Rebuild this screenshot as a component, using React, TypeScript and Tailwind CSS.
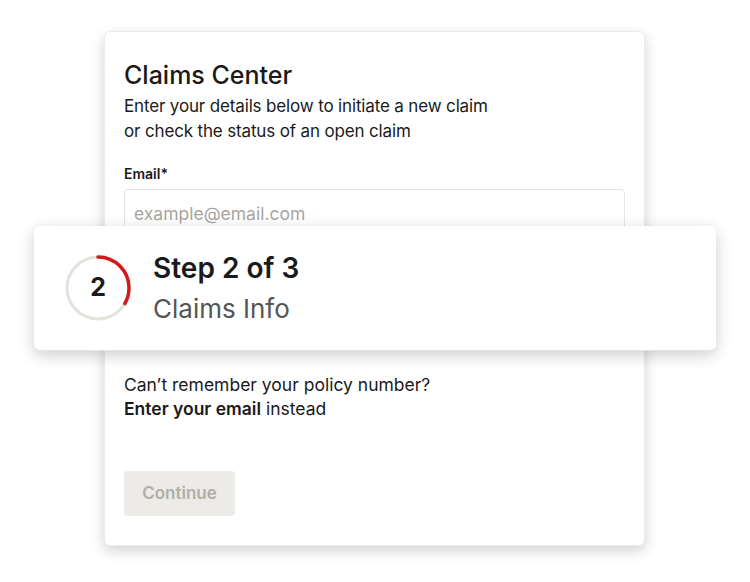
import React from "react";

export default function App() {
  const r = 31;
  const c = 2 * Math.PI * r;
  return (
    <div className="relative w-[750px] h-[582px] bg-white overflow-hidden" style={{ fontFamily: "Inter, 'Noto Sans', sans-serif" }}>
      <div className="absolute left-[104px] top-[31px] w-[541px] h-[515px] rounded-[6px] bg-white border border-[#ecebe7] shadow-[0_5px_14px_rgba(0,0,0,0.18)] px-[19px] pt-[27px]">
        <h1 className="text-[25px] leading-[32px] font-medium text-[#1a1a1a]">Claims Center</h1>
        <p className="mt-[3px] text-[17px] leading-[25px] tracking-[-0.15px] text-[#1a1a1a]">
          Enter your details below to initiate a new claim
          <br />
          or check the status of an open claim
        </p>
        <div className="mt-[20px] text-[14px] leading-[20px] font-semibold text-[#1a1a1a]">Email*</div>
        <div className="mt-[5px] h-[46px] rounded-[4px] border border-[#e6e4df] flex items-center pl-[9px] pt-[5px] text-[17.5px] text-[#a8a6a1]">
          example@email.com
        </div>
        <div className="mt-[138px] text-[17.5px] leading-[24px] text-[#1a1a1a]">
          <div>Can’t remember your policy number?</div>
          <div><span className="font-semibold">Enter your email</span> instead</div>
        </div>
        <button className="mt-[50px] w-[111px] h-[45px] rounded-[4px] bg-[#ecebe7] text-[#b2aea7] text-[17px] font-semibold">
          Continue
        </button>
      </div>
      <div className="absolute left-[34px] top-[226px] w-[682px] h-[125px] rounded-[6px] bg-white border-b border-[#e6e4df] shadow-[0_4px_16px_rgba(0,0,0,0.2)] flex items-center pl-[31px]">
        <div className="relative w-[66px] h-[66px] flex items-center justify-center">
          <svg width="66" height="66" viewBox="0 0 66 66" className="absolute inset-0">
            <circle cx="33" cy="33" r={r} fill="none" stroke="#e4e2dd" strokeWidth="3" />
            <circle
              cx="33"
              cy="33"
              r={r}
              fill="none"
              stroke="#d3191c"
              strokeWidth="3.5"
              strokeLinecap="round"
              strokeDasharray={`${c / 3} ${c}`}
              transform="rotate(-90 33 33)"
            />
          </svg>
          <span className="relative text-[25px] font-bold text-[#1a1a1a]">2</span>
        </div>
        <div className="ml-[22px] flex flex-col">
          <div className="text-[28px] leading-[34px] font-semibold text-[#1a1a1a]">Step 2 of 3</div>
          <div className="mt-[8px] text-[26px] leading-[32px] text-[#555553]">Claims Info</div>
        </div>
      </div>
    </div>
  );
}
